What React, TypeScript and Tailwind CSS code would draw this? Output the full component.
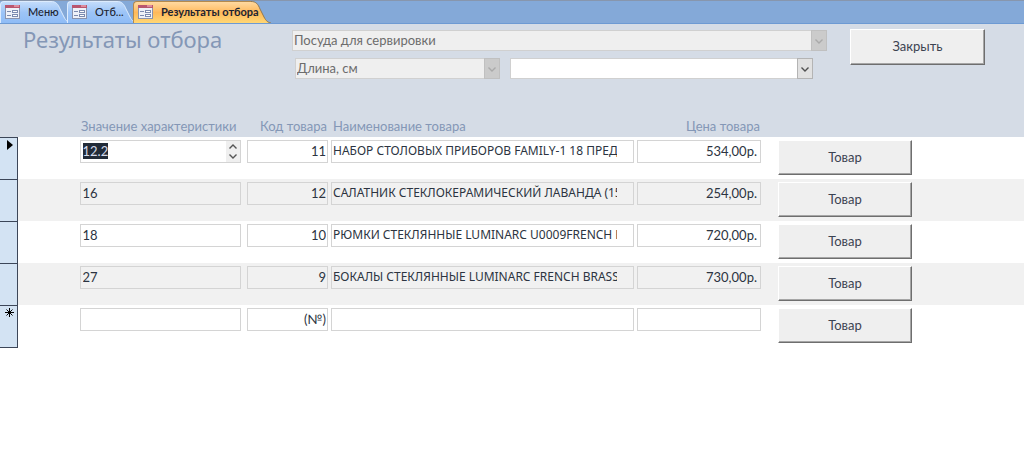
import React, { useEffect, useRef } from 'react';

type Row = {
  value: string;
  code: string;
  name: string;
  price: string;
};

const rows: Row[] = [
  { value: '12.2', code: '11', name: 'НАБОР СТОЛОВЫХ ПРИБОРОВ FAMILY-1 18 ПРЕДМЕТОВ', price: '534,00р.' },
  { value: '16', code: '12', name: 'САЛАТНИК СТЕКЛОКЕРАМИЧЕСКИЙ ЛАВАНДА (15 СМ)', price: '254,00р.' },
  { value: '18', code: '10', name: 'РЮМКИ СТЕКЛЯННЫЕ LUMINARC U0009FRENCH BRASSERIE', price: '720,00р.' },
  { value: '27', code: '9', name: 'БОКАЛЫ СТЕКЛЯННЫЕ LUMINARC FRENCH BRASSERIE', price: '730,00р.' },
  { value: '', code: '(№)', name: '', price: '' },
];

function FormIcon() {
  return (
    <svg className="relative w-4 h-4 shrink-0" viewBox="0 0 16 16">
      <rect x="0.5" y="1.5" width="14" height="13" fill="#eef1f8" stroke="#8a93ad" />
      <rect x="0" y="1" width="15" height="3" fill="#b9566f" />
      <rect x="9" y="1" width="5" height="2" fill="#dd8c9c" />
      <path d="M2 7.5h4M2 11.5h4" stroke="#7c8bb0" />
      <rect x="7.5" y="6.5" width="5" height="2" fill="#fff" stroke="#7c8bb0" />
      <rect x="7.5" y="10.5" width="5" height="2" fill="#fff" stroke="#7c8bb0" />
    </svg>
  );
}

function Chevron({ up = false }: { up?: boolean }) {
  return (
    <svg className="w-2 h-2" viewBox="0 0 8 8" fill="none" stroke="currentColor" strokeWidth="1.4">
      <path d={up ? 'M0.5 5.5L4 2l3.5 3.5' : 'M0.5 2.5L4 6l3.5-3.5'} />
    </svg>
  );
}

function Tab({ label, active = false, className }: { label: string; active?: boolean; className: string }) {
  return (
    <button
      type="button"
      role="tab"
      aria-selected={active}
      className={`relative flex items-center gap-[7px] h-[22px] pl-[5px] pb-px text-[11px] leading-4 text-[#1c2431] whitespace-nowrap ${active ? 'font-bold' : 'font-medium'} ${className}`}
    >
      <span className="absolute inset-0 flex">
        <span className={`flex-1 border-t border-l rounded-tl-sm ${active ? 'bg-linear-to-b from-[#ffd9a0] via-[#ffb95a] to-[#ffd775] border-[#b58a4c]' : 'bg-linear-to-b from-[#c3dcfb] via-[#9cc4f7] to-[#8fbcf6] border-[#dcebfd]'}`}></span>
        <svg className="w-5 h-full -mr-1" viewBox="0 0 20 22" preserveAspectRatio="none">
          <defs>
            <linearGradient id={active ? 'tab-on' : 'tab-off'} x1="0" y1="0" x2="0" y2="1">
              <stop offset="0" stopColor={active ? '#ffd9a0' : '#c3dcfb'} />
              <stop offset="0.5" stopColor={active ? '#ffb95a' : '#9cc4f7'} />
              <stop offset="1" stopColor={active ? '#ffd775' : '#8fbcf6'} />
            </linearGradient>
          </defs>
          <path d="M0 0.5C5 0.5 7 3 9 8L13 16C15 20 17 21.5 20 22H0z" fill={active ? 'url(#tab-on)' : 'url(#tab-off)'} />
          <path d="M0 0.5C5 0.5 7 3 9 8L13 16C15 20 17 21.5 20 22" fill="none" stroke={active ? '#94794f' : '#dcebfd'} />
        </svg>
      </span>
      <FormIcon />
      <span className="relative">{label}</span>
    </button>
  );
}

function Combo({ label, value, disabled = false, className }: { label: string; value: string; disabled?: boolean; className: string }) {
  return (
    <div className={`relative ${className}`}>
      <select
        aria-label={label}
        disabled={disabled}
        className={`block w-full h-[21px] pl-px pr-5 pb-[2px] appearance-none border border-[#d0d0d0] text-[13px] leading-4 opacity-100 ${disabled ? 'bg-[#efefef] text-[#6c6c6c]' : 'bg-white text-[#333f50]'}`}
      >
        <option>{value}</option>
      </select>
      <span
        className={`absolute inset-y-0 right-0 w-4 flex items-center justify-center border pointer-events-none ${disabled ? 'bg-[#cbcbcb] border-[#c0c0c0] text-[#aaaaaa]' : 'bg-[#e1e1e1] border-[#b4b4b4] text-[#505050]'}`}
      >
        <Chevron />
      </span>
    </div>
  );
}

function PushButton({ children, className }: { children: React.ReactNode; className: string }) {
  return (
    <button
      type="button"
      className={`block border border-t-white border-l-white border-r-[#6e6e6e] border-b-[#6e6e6e] bg-[#efefef] shadow-[inset_-1px_-1px_0_#a6a6a6] text-[13px] text-[#3c4351] ${className}`}
    >
      {children}
    </button>
  );
}

const field =
  'block w-full h-[23px] pb-[2px] border border-[#d4d4d4] bg-transparent leading-4 text-[#2c3441] outline-none selection:bg-[#222b38] selection:text-[#d3daea]';

export default function App() {
  const current = useRef<HTMLInputElement>(null);

  useEffect(() => {
    current.current?.focus();
    current.current?.select();
  }, []);

  return (
    <div className="min-h-screen bg-white font-['Lato','Noto_Sans',sans-serif]">
      {/* Document tabs */}
      <div role="tablist" className="flex items-end h-6 border-t border-[#8796ad] bg-[#84a9d8] border-b border-b-[#6d9ad3]">
        <Tab label="Меню" className="w-[67px]" />
        <Tab label="Отб..." className="w-[66px]" />
        <Tab label="Результаты отбора" active className="w-[134px]" />
      </div>

      {/* Form header */}
      <header className="flex h-[94px] pl-[23px] pr-[39px] bg-[#d5dce6]">
        <h1 className="w-[269px] shrink-0 font-['Noto_Sans',sans-serif] text-[22px] leading-[30px] text-[#8497b6]">Результаты отбора</h1>
        <div className="flex-1 min-w-0 pt-[6px]">
          <Combo label="Категория" value="Посуда для сервировки" disabled className="w-full" />
          <div className="flex gap-[10px] mt-[7px] pl-[3px] pr-[14px]">
            <Combo label="Характеристика" value="Длина, см" disabled className="w-[205px]" />
            <Combo label="Значение" value="" className="flex-1" />
          </div>
        </div>
        <PushButton className="w-[135px] h-9 ml-[23px] mt-[5px]">Закрыть</PushButton>
      </header>

      {/* Records */}
      <table className="w-full table-fixed border-collapse">
        <colgroup>
          <col className="w-[17px]" />
          <col className="w-[227px]" />
          <col className="w-[84px]" />
          <col />
          <col className="w-[127px]" />
          <col className="w-[263px]" />
        </colgroup>
        <thead>
          <tr className="h-[19px] align-top bg-[#d5dce6] text-[13px] leading-4 text-[#8497b6]">
            <td></td>
            <th scope="col" className="p-0 pl-16 text-left font-normal whitespace-nowrap">Значение характеристики</th>
            <th scope="col" className="p-0 pr-px text-right font-normal whitespace-nowrap">Код товара</th>
            <th scope="col" className="p-0 pl-[5px] text-left font-normal">Наименование товара</th>
            <th scope="col" className="p-0 pr-px text-right font-normal">Цена товара</th>
            <td></td>
          </tr>
        </thead>
        <tbody>
          {rows.map((row, i) => (
            <tr key={i} className="h-[42px] align-top even:bg-[#f1f1f1]">
              <td className="p-0 border border-l-0 border-[#3c4658] bg-[#d3e3f3] text-black">
                {i === 0 && (
                  <svg className="w-[6px] h-[10px] ml-[7px] mt-[2px]" viewBox="0 0 6 10">
                    <path d="M0 0l6 5-6 5z" />
                  </svg>
                )}
                {i === rows.length - 1 && (
                  <svg className="w-[9px] h-[9px] ml-[5px] mt-[2px]" viewBox="0 0 9 9" stroke="currentColor">
                    <path d="M4.5 0v9M0 4.5h9M1.5 1.5l6 6M7.5 1.5l-6 6" />
                  </svg>
                )}
              </td>
              <td className="p-0 pt-[3px] pl-[62px] pr-[3px]">
                <div className="relative">
                  <input ref={i === 0 ? current : undefined} aria-label="Значение характеристики" defaultValue={row.value} className={`${field} pl-[2px] text-[13px]`} />
                  {i === 0 && (
                    <div className="absolute right-px inset-y-px w-[14px] flex flex-col items-center justify-between py-[2px] bg-[#efefef] text-[#555555]">
                      <button type="button" aria-label="Больше"><Chevron up /></button>
                      <button type="button" aria-label="Меньше"><Chevron /></button>
                    </div>
                  )}
                </div>
              </td>
              <td className="p-0 pt-[3px] pl-[3px]">
                <input aria-label="Код товара" defaultValue={row.code} className={`${field} pr-px text-[13px] text-right`} />
              </td>
              <td className="p-0 pt-[3px] pl-[3px]">
                <input aria-label="Наименование товара" defaultValue={row.name} className={`${field} pl-px pr-4 font-['Noto_Sans',sans-serif] text-[12px]`} />
              </td>
              <td className="p-0 pt-[3px] pl-[3px]">
                <input aria-label="Цена товара" defaultValue={row.price} className={`${field} pr-[3px] text-[13px] text-right`} />
              </td>
              <td className="p-0 pt-[3px] pl-[17px]">
                <PushButton className="w-[134px] h-[35px]">Товар</PushButton>
              </td>
            </tr>
          ))}
        </tbody>
      </table>
    </div>
  );
}
